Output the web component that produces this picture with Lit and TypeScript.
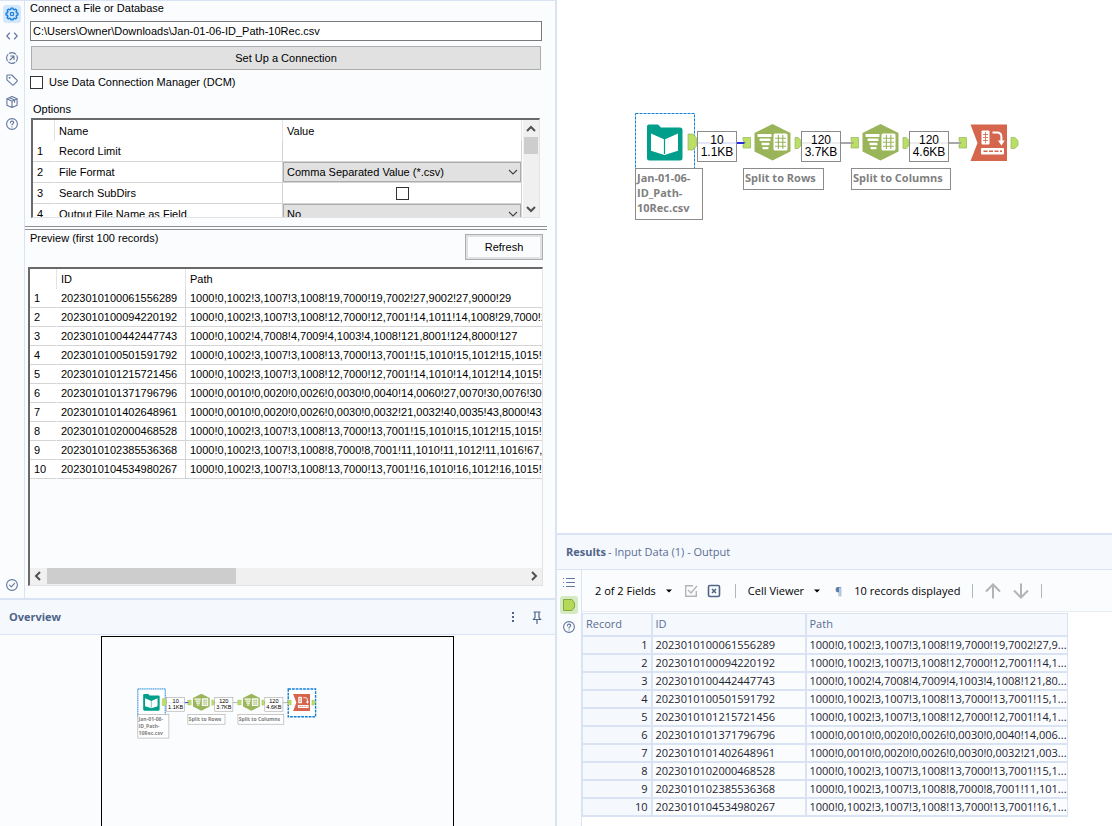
import { LitElement, html, svg, css } from "lit";
import { customElement, property } from "lit/decorators.js";

interface Row {
  id: string;
  path: string;
  short: string;
}

const ROWS: Row[] = [
  { id: "2023010100061556289", path: "1000!0,1002!3,1007!3,1008!19,7000!19,7002!27,9002!27,9000!29", short: "1000!0,1002!3,1007!3,1008!19,7000!19,7002!27,9..." },
  { id: "2023010100094220192", path: "1000!0,1002!3,1007!3,1008!12,7000!12,7001!14,1011!14,1008!29,7000!29", short: "1000!0,1002!3,1007!3,1008!12,7000!12,7001!14,1..." },
  { id: "2023010100442447743", path: "1000!0,1002!4,7008!4,7009!4,1003!4,1008!121,8001!124,8000!127", short: "1000!0,1002!4,7008!4,7009!4,1003!4,1008!121,80..." },
  { id: "2023010100501591792", path: "1000!0,1002!3,1007!3,1008!13,7000!13,7001!15,1010!15,1012!15,1015!20", short: "1000!0,1002!3,1007!3,1008!13,7000!13,7001!15,1..." },
  { id: "2023010101215721456", path: "1000!0,1002!3,1007!3,1008!12,7000!12,7001!14,1010!14,1012!14,1015!23", short: "1000!0,1002!3,1007!3,1008!12,7000!12,7001!14,1..." },
  { id: "2023010101371796796", path: "1000!0,0010!0,0020!0,0026!0,0030!0,0040!14,0060!27,0070!30,0076!30,0", short: "1000!0,0010!0,0020!0,0026!0,0030!0,0040!14,006..." },
  { id: "2023010101402648961", path: "1000!0,0010!0,0020!0,0026!0,0030!0,0032!21,0032!40,0035!43,8000!43", short: "1000!0,0010!0,0020!0,0026!0,0030!0,0032!21,003..." },
  { id: "2023010102000468528", path: "1000!0,1002!3,1007!3,1008!13,7000!13,7001!15,1010!15,1012!15,1015!23", short: "1000!0,1002!3,1007!3,1008!13,7000!13,7001!15,1..." },
  { id: "2023010102385536368", path: "1000!0,1002!3,1007!3,1008!8,7000!8,7001!11,1010!11,1012!11,1016!67,8", short: "1000!0,1002!3,1007!3,1008!8,7000!8,7001!11,101..." },
  { id: "2023010104534980267", path: "1000!0,1002!3,1007!3,1008!13,7000!13,7001!16,1010!16,1012!16,1015!23", short: "1000!0,1002!3,1007!3,1008!13,7000!13,7001!16,1..." },
];

const stroke = (body: unknown, size = 14) => html`<svg width=${size} height=${size} viewBox="0 0 14 14" fill="none" stroke="currentColor" stroke-width="1.1" stroke-linejoin="round" stroke-linecap="round" aria-hidden="true">${body}</svg>`;

const gearPath = (() => {
  const pts: string[] = [];
  for (let i = 0; i < 8; i++) {
    const base = (i * Math.PI) / 4;
    const spots: [number, number][] = [[-0.27, 4.7], [-0.17, 6], [0.17, 6], [0.27, 4.7]];
    for (const [a, r] of spots) {
      pts.push(`${(7 + r * Math.sin(base + a)).toFixed(2)} ${(7 - r * Math.cos(base + a)).toFixed(2)}`);
    }
  }
  return `M${pts.join("L")}Z`;
})();

const icons = {
  gear: stroke(svg`<path d=${gearPath} stroke-width="1.4"/><circle cx="7" cy="7" r="1.7" stroke-width="1.3"/>`),
  code: stroke(svg`<path d="M4.6 4 1.8 7l2.8 3M9.4 4l2.8 3-2.8 3"/>`),
  target: stroke(svg`<circle cx="7" cy="7" r="5.4" stroke-linecap="butt" stroke-dasharray="7.5 .98" stroke-dashoffset="3.700"/><path d="M5 9l3.9-3.9M5.6 5h3.4v3.4"/>`),
  tag: stroke(svg`<path d="M1.9 2.9q0-.9.9-.9h3.9l5.3 5.2q.6.6 0 1.2l-3.4 3.5q-.6.6-1.2 0L1.9 6.8z"/><circle cx="4.6" cy="4.7" r=".4"/>`),
  box: stroke(svg`<path d="M7 1.500 12.100 3.800v6.400L7 12.500 1.900 10.200V3.800zM1.900 3.800 7 6.200l5.100-2.400M7 6.200v6.300M4.400 2.700l5.200 2.400v2.200"/>`),
  help: stroke(svg`<circle cx="7" cy="7" r="5.4"/><path d="M5.4 5.7c0-2.200 3.300-2.100 3.300-.1C8.700 6.800 7 6.700 7 8M7 9.800v.1"/>`),
  check: stroke(svg`<circle cx="7" cy="7" r="5.4"/><path d="M4.500 7.200l1.800 1.700 3.300-3.600"/>`),
  list: stroke(svg`<path d="M1.500 2.500h.1M1.500 6.500h.1M1.500 10.500h.1M4.500 2.500h8M4.500 6.500h8M4.500 10.500h8"/>`),
};

const outAnchor = (x: number, y: number, w: number, h: number) => svg`
  <path d="M${x} ${y}h${w * 0.55}l${w * 0.45} ${h * 0.28}v${h * 0.44}l${-w * 0.45} ${h * 0.28}h${-w * 0.55}z" fill="#bbdf66" stroke="#93b659" stroke-width=".7"/>`;
const inAnchor = (x: number) => svg`
  <path d="M${x} 32.500h7.500v10.500h-7.500v-3.200l2.600-2-2.600-2z" fill="#bbdf66" stroke="#93b659" stroke-width=".7"/>`;

const parseTool = (x: number) => svg`
  <g transform="translate(${x} 0)">
    <path d="M18.500 19 36.500 28v18.500L18.500 55.500.500 46.500V28z" fill="#9ab45a"/>
    <g fill="#fff">
      <rect x="3.500" y="29" width="14" height="3" rx=".6"/>
      <rect x="5.500" y="33.500" width="11" height="2.600" rx=".6"/>
      <rect x="7.500" y="37.800" width="8" height="2.400" rx=".6"/>
      <rect x="8.500" y="42" width="6" height="2.200" rx=".6"/>
      <rect x="19.500" y="28.500" width="14" height="17" rx="1.500"/>
    </g>
    <path d="M21 33.200h11M21 37.200h11M21 41.200h11M24.400 30v14M28.800 30v14" stroke="#9ab45a" stroke-width="1.100"/>
  </g>`;

const countBox = (x: number, count: string, size: string, line: string) => svg`
  <rect x=${x + 0.5} y="26.500" width="39" height="30" fill="#fff" stroke="#8b8b8b"/>
  <path d="M${x + 1} 38h38" stroke=${line} stroke-width="1.500"/>
  <text class="count" x=${x + 20} y="39">${count}</text>
  <text class="count" x=${x + 20} y="51">${size}</text>`;

const labelBox = (x: number, w: number, lines: string[]) => svg`
  <rect x=${x + 0.5} y="63.500" width=${w} height=${lines.length * 15 + 6} fill="#fff" stroke="#8b8b8b"/>
  ${lines.map((t, i) => svg`<text class="label" x=${x + 2} y=${77 + i * 15}>${t}</text>`)}`;

@customElement("workflow-diagram")
export class WorkflowDiagram extends LitElement {
  @property({ type: Boolean }) overview = false;

  static styles = css`
    :host { display: block; }
    svg { display: block; width: 100%; height: auto; }
    .count { font: 12px "Liberation Sans", Arial, sans-serif; fill: #000; text-anchor: middle; }
    .label { font: 700 11px "Open Sans", "Noto Sans", sans-serif; fill: #808080; }
  `;

  render() {
    return html`<svg viewBox="0 0 410 120" role="img" aria-label="Workflow">
      <rect x="10.500" y="8.500" width="59" height="60" fill="#fff" stroke="#1080d8" stroke-width=${this.overview ? 2 : 1} stroke-dasharray="3 1"/>
      ${this.overview
        ? svg`<rect x="335" y="8.500" width="59" height="60" fill="#fff" stroke="#1080d8" stroke-width="3" stroke-dasharray="6 2"/>`
        : null}
      <path d="M72 38h50" stroke="#2a2ae0" stroke-width="2"/>
      <path d="M176 38h54M284 38h54" stroke="#8b8b8b" stroke-width="1.400"/>

      <path d="M22 21.500q0-2 2-2h9l3 3h19q2.500 0 2.500 2.500v28q0 2.500-2.500 2.500H24.500q-2.500 0-2.500-2.500z" fill="#009e8b"/>
      <path d="M39.500 34.500v15.500L26 45.800V28.500z M39.500 34.500v15.500L53 45.800V28.500z" fill="#fff"/>
      <path d="M39.500 34v15" stroke="#009e8b" stroke-width="1.200"/>
      ${outAnchor(63, 29, 9, 16)}
      ${countBox(72, "10", "1.1KB", "#dcdcf8")}
      ${inAnchor(118)}
      ${parseTool(129)}
      ${outAnchor(170, 32.5, 6, 11)}
      ${countBox(176, "120", "3.7KB", "#e6e6e6")}
      ${inAnchor(226)}
      ${parseTool(237)}
      ${outAnchor(278, 32.5, 6, 11)}
      ${countBox(284, "120", "4.6KB", "#e6e6e6")}
      ${inAnchor(334)}
      <path d="M345.500 19.500H382V56h-36.500l7-18z" fill="#d5664d"/>
      <g fill="#fff">
        <rect x="356.500" y="25.500" width="8" height="14" rx="1"/>
        <rect x="356" y="43" width="23" height="6.500" rx="1"/>
        <path d="M373 35.500h6.800l-3.400 5z"/>
      </g>
      <path d="M358 29.500h5M358 32.500h5M358 35.500h5M360.500 27v11" stroke="#d5664d" stroke-width=".8"/>
      <path d="M358.500 46.200h18.500" stroke="#d5664d" stroke-width="1.500" stroke-dasharray="4 1.500"/>
      <path d="M367.500 27.500h4.500q4.400 0 4.400 4.500v5" fill="none" stroke="#fff" stroke-width="2"/>
      ${outAnchor(386, 32.5, 7, 11)}
      ${labelBox(10, 67, ["Jan-01-06-", "ID_Path-", "10Rec.csv"])}
      ${labelBox(118, 80, ["Split to Rows"])}
      ${labelBox(226, 99, ["Split to Columns"])}
    </svg>`;
  }
}

const rail = css`
  .rail { display: flex; flex-direction: column; align-items: center; gap: 4px; border-right: 1px solid #d9e3f3; color: #62779d; }
  .rail button { display: grid; place-items: center; width: 18px; height: 18px; padding: 0; border: 0; border-radius: 3px; background: none; color: inherit; flex: none; }
`;

@customElement("config-panel")
export class ConfigPanel extends LitElement {
  static styles = [rail, css`
    :host { display: grid; grid-template-columns: 25px minmax(0, 1fr); min-height: 0; border-top: 1px solid #d9e3f3; border-bottom: 2px solid #d9e3f3; background: #fbfcfe; font: 11px/14px "Liberation Sans", Arial, sans-serif; color: #000; box-sizing: border-box; }
    * { box-sizing: border-box; }
    button, input, select { font: inherit; color: inherit; margin: 0; }
    .rail { padding: 4px 0; }
    .rail .active { background: #d3e8fc; color: #1c81dc; }
    .rail .last { margin-top: auto; }
    .body { display: flex; flex-direction: column; min-width: 0; min-height: 0; }
    .form { display: flex; flex-direction: column; padding: 0 13px 8px 5px; }
    .path { height: 20px; margin: 6px 0 5px; padding: 0 2px; border: 1px solid #7a7a7a; border-radius: 0; background: #fff; }
    .connect { height: 24px; margin: 0 1px; border: 1px solid #adadad; background: #e1e1e1; }
    .dcm { display: flex; align-items: center; gap: 6px; margin-top: 5px; }
    input[type="checkbox"] { appearance: none; width: 13px; height: 13px; border: 1px solid #333; background: #fff; display: block; }
    .caption { margin: 13px 3px 2px; }
    .options { display: flex; height: 100px; margin: 0 2px 0 1px; border: 1px solid #e3e3e3; border-top: 2px solid #696969; border-left: 2px solid #696969; background: #fff; overflow: hidden; }
    .scroller { flex: 1; min-width: 0; overflow: hidden; }
    table { width: 100%; border-collapse: separate; border-spacing: 0; table-layout: fixed; background: #fff; }
    th, td { padding: 0 4px; text-align: left; font-weight: 400; white-space: nowrap; overflow: hidden; border-right: 1px solid #d4d4d4; border-bottom: 1px solid #d4d4d4; }
    th[scope="row"] { border-right-color: #fff; }
    thead th, thead td { border-bottom: 0; border-right-color: #e3e3e3; }
    .num { width: 22px; }
    .opt tr { height: 21px; }
    .opt .name { width: 228px; }
    .opt td.field { padding: 0; }
    .opt input { margin: 0 auto; }
    .pick { position: relative; display: block; }
    .pick select { display: block; appearance: none; width: 100%; height: 20px; padding: 0 20px 0 3px; border: 1px solid #adadad; border-radius: 0; background: #e1e1e1; }
    .pick svg { position: absolute; right: 3px; top: 7px; }
    .vbar { width: 16px; display: flex; flex-direction: column; background: #f0f0f0; margin-left: 1px; }
    .bar button { display: grid; place-items: center; width: 16px; height: 17px; flex: none; padding: 0; border: 0; background: none; }
    .vthumb { height: 17px; margin: 0 1px; background: #cdcdcd; }
    .vbar .end { margin-top: auto; }
    .splitter { height: 4px; margin-right: 8px; border-top: 1px solid #8f8f8f; border-bottom: 1px solid #8f8f8f; flex: none; }
    .head { display: flex; justify-content: space-between; padding: 1px 12px 7px 5px; }
    .head button { width: 78px; height: 26px; margin-top: 3px; border: 1px solid #adadad; background: #fbfcfe; box-shadow: inset 0 0 0 2px #e1e1e1; }
    .preview { flex: 1; min-height: 0; display: flex; flex-direction: column; margin: 0 12px 12px 3px; border: 1px solid #e3e3e3; border-top: 2px solid #696969; border-left: 2px solid #696969; background: #fbfcfe; }
    .preview tr { height: 19px; }
    .preview thead tr { height: 20px; }
    .preview .num { width: 27px; }
    .preview .id { width: 129px; }
    .preview td:last-child, .preview th:last-child { border-right: 0; }
    .hbar { display: flex; height: 17px; padding-bottom: 1px; background: #f0f0f0; flex: none; }
    .hbar button { height: 16px; }
    .hthumb { width: 37%; margin-left: 1px; background: #cdcdcd; }
    .hbar .end { margin-left: auto; }
  `];

  private arrow(d: string, label: string, end = false) {
    return html`<button class=${end ? "end" : ""} aria-label=${label}><svg width="10" height="10" viewBox="0 0 10 10" fill="none" stroke="#505050" stroke-width="2"><path d=${d}/></svg></button>`;
  }

  private select(id: string, value: string) {
    return html`<span class="pick"><select id=${id} aria-label=${id}><option>${value}</option></select>
      <svg width="10" height="7" viewBox="0 0 10 7" fill="none" stroke="#444" stroke-width="1.100"><path d="M1 1l4 4 4-4"/></svg></span>`;
  }

  render() {
    return html`
      <nav class="rail" aria-label="Configuration">
        <button class="active" aria-label="Configuration">${icons.gear}</button>
        <button aria-label="XML">${icons.code}</button>
        <button aria-label="Navigation">${icons.target}</button>
        <button aria-label="Annotation">${icons.tag}</button>
        <button aria-label="Packages">${icons.box}</button>
        <button aria-label="Help">${icons.help}</button>
        <button class="last" aria-label="Status">${icons.check}</button>
      </nav>
      <div class="body">
        <div class="form">
          <label for="file">Connect a File or Database</label>
          <input class="path" id="file" type="text" .value=${"C:\\Users\\Owner\\Downloads\\Jan-01-06-ID_Path-10Rec.csv"} />
          <button class="connect">Set Up a Connection</button>
          <label class="dcm"><input type="checkbox" />Use Data Connection Manager (DCM)</label>
          <div class="caption">Options</div>
          <div class="options">
            <div class="scroller">
              <table class="opt">
                <thead><tr><td class="num"></td><th class="name" scope="col">Name</th><th scope="col">Value</th></tr></thead>
                <tbody>
                  <tr><th scope="row">1</th><td>Record Limit</td><td></td></tr>
                  <tr><th scope="row">2</th><td>File Format</td><td class="field">${this.select("File Format", "Comma Separated Value (*.csv)")}</td></tr>
                  <tr><th scope="row">3</th><td><label for="sub">Search SubDirs</label></td><td class="field"><input id="sub" type="checkbox" /></td></tr>
                  <tr><th scope="row">4</th><td>Output File Name as Field</td><td class="field">${this.select("Output File Name as Field", "No")}</td></tr>
                </tbody>
              </table>
            </div>
            <div class="bar vbar">
              ${this.arrow("M1 7l4-4 4 4", "Scroll up")}
              <div class="vthumb"></div>
              ${this.arrow("M1 3l4 4 4-4", "Scroll down", true)}
            </div>
          </div>
        </div>
        <div class="splitter"></div>
        <div class="head"><span>Preview (first 100 records)</span><button>Refresh</button></div>
        <div class="preview">
          <div class="scroller">
            <table>
              <thead><tr><td class="num"></td><th class="id" scope="col">ID</th><th scope="col">Path</th></tr></thead>
              <tbody>${ROWS.map((r, i) => html`<tr><th scope="row">${i + 1}</th><td>${r.id}</td><td>${r.path}</td></tr>`)}</tbody>
            </table>
          </div>
          <div class="bar hbar">
            ${this.arrow("M7 1L3 5l4 4", "Scroll left")}
            <div class="hthumb"></div>
            ${this.arrow("M3 1l4 4-4 4", "Scroll right", true)}
          </div>
        </div>
      </div>`;
  }
}

@customElement("overview-panel")
export class OverviewPanel extends LitElement {
  static styles = css`
    :host { display: flex; flex-direction: column; min-height: 0; background: #fbfcfe; font: 11px/14px "Open Sans", "Noto Sans", sans-serif; color: #4f6489; }
    header { display: flex; align-items: center; gap: 10px; height: 34px; padding: 0 11px 0 9px; background: #f5f8fd; border-bottom: 1px solid #d9e3f3; flex: none; }
    h2 { margin: 0 auto 0 0; font-size: 11px; line-height: 14px; font-weight: 700; }
    button { display: grid; place-items: center; width: 14px; height: 16px; padding: 0; border: 0; background: none; color: inherit; }
    .view { flex: 1; min-height: 0; display: flex; justify-content: center; padding-top: 1px; overflow: hidden; }
    .sheet { width: 353px; box-sizing: border-box; border: 1px solid #000; border-bottom: 0; padding: 48px 0 0 31px; }
    workflow-diagram { width: 190px; }
  `;

  render() {
    return html`
      <header>
        <h2>Overview</h2>
        <button aria-label="Menu"><svg width="4" height="12" viewBox="0 0 4 12" fill="currentColor"><path d="M1 1h2v2H1zM1 5h2v2H1zM1 9h2v2H1z"/></svg></button>
        <button aria-label="Pin"><svg width="10" height="13" viewBox="0 0 10 13" fill="none" stroke="currentColor" stroke-width="1.200"><path d="M1.500 1h7M3 1v5.500L1.500 8.500h7L7 6.500V1M5 8.500V13"/></svg></button>
      </header>
      <div class="view"><div class="sheet"><workflow-diagram overview></workflow-diagram></div></div>`;
  }
}

@customElement("results-panel")
export class ResultsPanel extends LitElement {
  static styles = [rail, css`
    :host { display: flex; flex-direction: column; min-height: 0; border-top: 2px solid #d9e3f3; background: #fff; font: 11px/14px "Open Sans", "Noto Sans", sans-serif; color: #000; }
    * { box-sizing: border-box; }
    header { display: flex; align-items: center; gap: 2px; height: 35px; padding: 0 9px; background: #f5f8fd; border-bottom: 1px solid #d9e3f3; color: #5a6e94; flex: none; }
    h2 { margin: 0; font-size: 11px; line-height: 14px; font-weight: 700; color: #4f6489; }
    .main { flex: 1; min-height: 0; display: grid; grid-template-columns: 25px minmax(0, 1fr); }
    .rail { padding-top: 4px; background: #fbfcfe; }
    .rail .active { background: #d3ebc3; }
    .toolbar { display: flex; align-items: center; height: 42px; padding-left: 13px; background: #fbfcfe; border-bottom: 1px solid #e8edf5; }
    .toolbar button { display: flex; align-items: center; gap: 10px; padding: 0; border: 0; background: none; font: inherit; color: inherit; white-space: nowrap; }
    .toolbar svg { display: block; flex: none; }
    .group { display: flex; align-items: center; gap: 9px; }
    .sep { width: 1px; height: 14px; margin: 0 12px; background: #b5b5b5; }
    .check { margin: 0 2px 0 12px; }
    .pilcrow { margin: 0 12px 0 15px; color: #5b7da8; }
    .arrows { display: flex; gap: 12px; }
    .wrap { padding-top: 1px; }
    table { width: 486px; max-width: 100%; table-layout: fixed; border-collapse: collapse; background: #fbfcfe; }
    th, td { height: 18px; padding: 0 3px; border: 2px solid #d9e3f3; text-align: left; font-weight: 400; white-space: nowrap; overflow: hidden; line-height: 14px; color: #1c2430; }
    tr > :first-child { border-left-width: 1px; }
    tr > :last-child { padding-right: 0; border-right-width: 1px; }
    thead th { height: 22px; background: #f5f8fd; color: #5a6e94; border-top-width: 1px; }
    .rec { width: 69px; }
    .id { width: 154px; }
    tbody th { text-align: right; background: #f5f8fd; }
  `];

  render() {
    const caret = html`<svg width="6" height="4" viewBox="0 0 6 4"><path d="M0 .5h6L3 3.500z"/></svg>`;
    return html`
      <header><h2>Results</h2><span>- Input Data (1) - Output</span></header>
      <div class="main">
        <nav class="rail" aria-label="Results">
          <button aria-label="Messages">${icons.list}</button>
          <button class="active" aria-label="Output"><svg width="14" height="14" viewBox="0 0 14 14" fill="#b5d957" stroke="#86a83c"><path d="M1.500 1.500h8.500l2.500 3.500v4L10 12.500H1.500z"/></svg></button>
          <button aria-label="Help">${icons.help}</button>
        </nav>
        <div>
          <div class="toolbar">
            <button>2 of 2 Fields ${caret}</button>
            <div class="group check">
              <button aria-label="Select all"><svg width="14" height="14" viewBox="0 0 14 14" fill="none" stroke="#b4b4b4" stroke-width="1.400"><path d="M12.300 7v5.300H1.700V1.700H9M4 6l3 3 6-7"/></svg></button>
              <button aria-label="Deselect all"><svg width="14" height="14" viewBox="0 0 14 14" fill="none" stroke="#4f6489" stroke-width="1.600"><rect x="1.500" y="1.500" width="11" height="11" rx="1.500"/><path d="M5 5l4 4M9 5l-4 4"/></svg></button>
            </div>
            <span class="sep"></span>
            <button>Cell Viewer ${caret}</button>
            <span class="pilcrow">¶</span>
            <span>10 records displayed</span>
            <span class="sep"></span>
            <div class="arrows">
              <button aria-label="Previous"><svg width="16" height="16" viewBox="0 0 16 16" fill="none" stroke="#b4b4b4" stroke-width="2"><path d="M8 15.500V2M1 8.500l7-7 7 7"/></svg></button>
              <button aria-label="Next"><svg width="16" height="16" viewBox="0 0 16 16" fill="none" stroke="#b4b4b4" stroke-width="2"><path d="M8 .5V14M1 7.500l7 7 7-7"/></svg></button>
            </div>
            <span class="sep"></span>
          </div>
          <div class="wrap">
            <table>
              <thead><tr><th class="rec" scope="col">Record</th><th class="id" scope="col">ID</th><th scope="col">Path</th></tr></thead>
              <tbody>${ROWS.map((r, i) => html`<tr><th scope="row">${i + 1}</th><td>${r.id}</td><td>${r.short}</td></tr>`)}</tbody>
            </table>
          </div>
        </div>
      </div>`;
  }
}

@customElement("app-root")
export class AppRoot extends LitElement {
  static styles = css`
    :host { display: grid; grid-template-columns: 557fr 555fr; height: 100vh; overflow: hidden; background: #fff; }
    .left { display: grid; grid-template-rows: minmax(0, 1fr) 226px; min-width: 0; min-height: 0; border-right: 2px solid #d9e3f3; }
    .right { display: grid; grid-template-rows: minmax(0, 1fr) 293px; min-width: 0; min-height: 0; }
    .canvas { position: relative; overflow: hidden; background: #fff; }
    .flow { position: absolute; left: 68px; top: 105px; width: 410px; }
  `;

  render() {
    return html`
      <div class="left"><config-panel></config-panel><overview-panel></overview-panel></div>
      <div class="right">
        <div class="canvas"><workflow-diagram class="flow"></workflow-diagram></div>
        <results-panel></results-panel>
      </div>`;
  }
}
